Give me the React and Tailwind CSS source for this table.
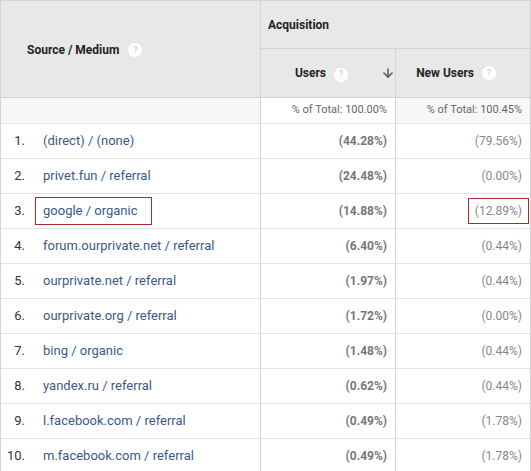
import { ArrowDown } from 'lucide-react'

const rows = [
  { src: '(direct) / (none)', users: '(44.28%)', nu: '(79.56%)' },
  { src: 'privet.fun / referral', users: '(24.48%)', nu: '(0.00%)' },
  { src: 'google / organic', users: '(14.88%)', nu: '(12.89%)', mark: true },
  { src: 'forum.ourprivate.net / referral', users: '(6.40%)', nu: '(0.44%)' },
  { src: 'ourprivate.net / referral', users: '(1.97%)', nu: '(0.44%)' },
  { src: 'ourprivate.org / referral', users: '(1.72%)', nu: '(0.00%)' },
  { src: 'bing / organic', users: '(1.48%)', nu: '(0.44%)' },
  { src: 'yandex.ru / referral', users: '(0.62%)', nu: '(0.44%)' },
  { src: 'l.facebook.com / referral', users: '(0.49%)', nu: '(1.78%)' },
  { src: 'm.facebook.com / referral', users: '(0.49%)', nu: '(1.78%)' },
]

function Help() {
  return (
    <span className="inline-flex h-[14px] w-[14px] items-center justify-center rounded-full bg-white text-[9px] font-normal leading-none text-[#c4c4c4]">
      ?
    </span>
  )
}

export default function App() {
  return (
    <div className="w-[531px] border-l border-r border-t border-[#d3d3d3] bg-white font-['Roboto',sans-serif]">
      {/* header */}
      <div className="flex h-[97px] border-b border-[#d3d3d3] bg-[#e8e8e8]">
        <div className="flex w-[260px] items-center gap-[9px] border-r border-[#d3d3d3] pl-[26px] pt-[2px] text-[12px] font-bold text-[#222]">
          Source / Medium <Help />
        </div>
        <div className="flex flex-1 flex-col">
          <div className="flex h-[48px] items-center border-b border-[#d3d3d3] pl-[7px] text-[12px] font-bold text-[#222]">
            Acquisition
          </div>
          <div className="flex flex-1">
            <div className="flex w-[135px] items-center justify-end border-r border-[#d3d3d3] text-[12px] font-bold text-[#222]">
              Users
              <span className="ml-[8px]"><Help /></span>
              <ArrowDown className="ml-[33px] size-[14px] text-[#555]" strokeWidth={2.6} />
            </div>
            <div className="flex flex-1 items-center justify-end gap-[8px] pr-[34px] text-[12px] font-bold text-[#222]">
              New Users <Help />
            </div>
          </div>
        </div>
      </div>

      {/* totals */}
      <div className="flex h-[26px] border-b border-[#e3e3e3] text-[11px] text-[#666]">
        <div className="w-[260px] border-r border-[#d3d3d3] bg-[#f7f7f7]" />
        <div className="flex w-[135px] items-center justify-end border-r border-[#d3d3d3] bg-white pr-[8px]">
          % of Total: 100.00%
        </div>
        <div className="flex flex-1 items-center justify-end bg-[#f7f7f7] pr-[8px]">
          % of Total: 100.45%
        </div>
      </div>

      {/* rows */}
      {rows.map((r, i) => (
        <div key={r.src} className="flex h-[35px] border-b border-[#e3e3e3] text-[13px]">
          <div className="flex w-[260px] items-center border-r border-[#d3d3d3]">
            <span className="w-[24px] text-right text-[#333]">{i + 1}.</span>
            <span
              className={`ml-[10px] border py-[3px] pl-[7px] text-[#3a5a87] ${
                r.mark ? 'border-[#b0282f] pr-[13px]' : 'border-transparent pr-[7px]'
              }`}
            >
              {r.src}
            </span>
          </div>
          <div className="flex w-[135px] items-center justify-end border-r border-[#d3d3d3] pr-[8px] text-[12px] font-bold text-[#777]">
            {r.users}
          </div>
          <div className="flex flex-1 items-center justify-end pr-[1px] text-[12px] text-[#888]">
            <span
              className={`border px-[6px] py-[3px] ${
                r.mark ? 'border-[#b0282f]' : 'border-transparent'
              }`}
            >
              {r.nu}
            </span>
          </div>
        </div>
      ))}
    </div>
  )
}
